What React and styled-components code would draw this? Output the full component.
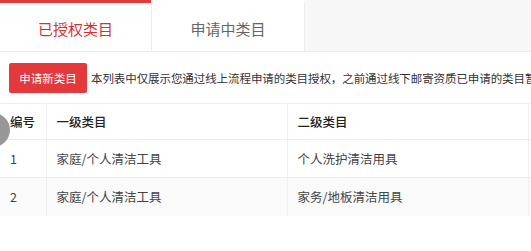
import styled, { createGlobalStyle } from 'styled-components';

const GlobalStyle = createGlobalStyle`
  html, body {
    margin: 0;
    padding: 0;
    background: #fff;
  }
  body {
    font-family: "Noto Sans CJK SC", "Noto Sans", sans-serif;
    color: #333;
  }
`;

const Page = styled.div`
  position: relative;
  width: 531px;
  height: 251px;
  overflow: hidden;
  background: #fff;
`;

const TabBar = styled.div`
  display: flex;
  height: 52px;
  box-sizing: border-box;
  background: #f7f7f7;
  border-bottom: 1px solid #ececec;
`;

const Tab = styled.div`
  width: ${(p) => p.$width}px;
  box-sizing: border-box;
  display: flex;
  align-items: center;
  justify-content: center;
  background: #fff;
  border-top: 3px solid ${(p) => (p.$active ? '#e4393c' : '#fff')};
  border-left: ${(p) => (p.$divider ? '1px solid #ececec' : 'none')};
  border-right: ${(p) => (p.$divider ? '1px solid #ececec' : 'none')};
  padding-top: 2px;
  font-size: 15px;
  color: ${(p) => (p.$active ? '#d9302f' : '#666')};
  cursor: pointer;
`;

const Toolbar = styled.div`
  display: flex;
  align-items: center;
  gap: 4px;
  padding: 11px 0 10px 9px;
  white-space: nowrap;
  overflow: hidden;
`;

const AddButton = styled.button`
  height: 30px;
  width: 78px;
  flex-shrink: 0;
  padding: 0;
  border: none;
  border-radius: 2px;
  background: #e4393c;
  color: #fff;
  font-family: inherit;
  font-size: 11.5px;
  cursor: pointer;
`;

const Notice = styled.span`
  font-size: 11.5px;
  letter-spacing: -0.08px;
  color: #333;
`;

const Table = styled.table`
  width: 800px;
  border-collapse: collapse;
  table-layout: fixed;
  border-top: 1px solid #ececec;
`;

const Th = styled.th`
  height: 35px;
  padding: 0 10px;
  text-align: left;
  font-size: 12.5px;
  font-weight: 500;
  color: #222;
  border-bottom: 1px solid #ececec;
  border-right: 1px solid #f0f0f0;
`;

const Row = styled.tr`
  background: ${(p) => (p.$striped ? '#fafafa' : '#fff')};
`;

const Td = styled.td`
  height: 37px;
  padding: 0 10px;
  font-size: 12.5px;
  color: #444;
  border-bottom: 1px solid ${(p) => (p.$last ? 'transparent' : '#ececec')};
  border-right: 1px solid #f0f0f0;
`;

const FloatDot = styled.div`
  position: absolute;
  left: -24px;
  top: 113px;
  width: 34px;
  height: 34px;
  border-radius: 50%;
  background: rgba(140, 140, 140, 0.9);
`;

const rows = [
  { id: 1, first: '家庭/个人清洁工具', second: '个人洗护清洁用具' },
  { id: 2, first: '家庭/个人清洁工具', second: '家务/地板清洁用具' },
];

const App = () => {
  return (
    <>
      <GlobalStyle />
      <Page>
        <TabBar>
          <Tab $active $width={151}>已授权类目</Tab>
          <Tab $divider $width={154}>申请中类目</Tab>
        </TabBar>
        <Toolbar>
          <AddButton>申请新类目</AddButton>
          <Notice>
            本列表中仅展示您通过线上流程申请的类目授权，之前通过线下邮寄资质已申请的类目暂
          </Notice>
        </Toolbar>
        <Table>
          <colgroup>
            <col style={{ width: 46 }} />
            <col style={{ width: 241 }} />
            <col style={{ width: 241 }} />
            <col />
          </colgroup>
          <thead>
            <tr>
              <Th>编号</Th>
              <Th>一级类目</Th>
              <Th>二级类目</Th>
              <Th></Th>
            </tr>
          </thead>
          <tbody>
            {rows.map((item, idx) => (
              <Row key={item.id} $striped={idx % 2 === 1}>
                <Td $last={idx === rows.length - 1}>{item.id}</Td>
                <Td $last={idx === rows.length - 1}>{item.first}</Td>
                <Td $last={idx === rows.length - 1}>{item.second}</Td>
                <Td $last={idx === rows.length - 1}></Td>
              </Row>
            ))}
          </tbody>
        </Table>
        <FloatDot />
      </Page>
    </>
  );
};

export default App;
